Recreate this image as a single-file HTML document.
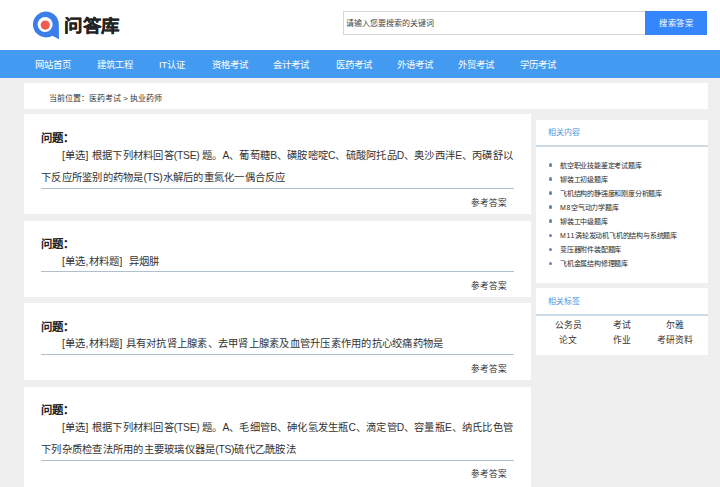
<!DOCTYPE html>
<html lang="zh-CN">
<head>
<meta charset="utf-8">
<style>
*{margin:0;padding:0;box-sizing:border-box;}
html,body{width:720px;height:487px;overflow:hidden;}
body{background:#efefef;font-family:"Liberation Sans",sans-serif;color:#333;position:relative;}
.abs{position:absolute;}
.j{text-align:justify;text-align-last:justify;}
#header{left:0;top:0;width:720px;height:50px;background:#fff;}
#logo{left:30px;top:10px;width:32px;height:32px;}
#logotext{left:64px;top:15.8px;transform:scale(0.975,0.87);transform-origin:0 0;-webkit-text-stroke:0.35px #222;font-size:19px;font-weight:bold;color:#222;line-height:24px;letter-spacing:0px;white-space:nowrap;}
#search{left:343px;top:11px;width:303px;height:24px;border:1px solid #d6d6d6;background:#fff;}
#search span{position:absolute;left:2px;top:6.7px;font-size:8px;line-height:10px;color:#444;white-space:nowrap;}
#btn{left:645px;top:11px;width:62px;height:24px;background:#3686fb;color:#fff;font-size:8.5px;line-height:24px;text-align:center;}
#nav{left:0;top:50px;width:720px;height:28px;background:#439af1;}
#nav span{position:absolute;top:1px;line-height:28px;font-size:9.4px;color:#fff;white-space:nowrap;}
#crumb{left:24px;top:83px;width:684px;height:26px;background:#fff;}
#crumb span{position:absolute;left:25px;top:9.5px;font-size:8px;line-height:11px;color:#333;white-space:nowrap;}
.q{position:absolute;left:24px;width:507px;background:#fff;}
.q .t{position:absolute;left:17px;width:33px;font-size:11.4px;font-weight:bold;color:#222;line-height:14px;white-space:nowrap;}
.q .c{position:absolute;left:17px;font-size:10.3px;line-height:22px;letter-spacing:0.25px;color:#333;white-space:nowrap;}
.q .c i{font-style:normal;letter-spacing:-0.25px;}
.q .line{position:absolute;left:17px;width:473px;height:1px;background:#b0c0d0;}
.q .ans{position:absolute;right:24px;width:36px;font-size:8.6px;line-height:11px;color:#333;white-space:nowrap;}
.side{position:absolute;left:536px;width:172px;background:#fff;}
.side .h{position:absolute;left:12px;width:32px;font-size:8px;line-height:11px;color:#5394e3;white-space:nowrap;}
.side .hl{position:absolute;left:0;width:172px;height:2px;background:#ccdae5;}
.side ul{list-style:none;position:absolute;left:0;top:0;}
.side li{position:absolute;left:24px;font-size:7px;line-height:9px;letter-spacing:-0.2px;color:#2a2a2a;white-space:nowrap;}
.side li:before{content:"";position:absolute;left:-11.5px;top:2.5px;width:3.5px;height:3.5px;border-radius:50%;background:#6a84b0;}
.side li i{font-style:normal;letter-spacing:0.6px;}
.tag{position:absolute;font-size:8.8px;line-height:11px;color:#333;white-space:nowrap;transform:translateX(-50%);}
</style>
</head>
<body>
<div id="header" class="abs"></div>
<svg id="logo" class="abs" viewBox="0 0 32 32">
  <path d="M28.8 14.5 A12.9 12.9 0 1 0 22.35 25.67 L29 29.2 L28.8 14.5 Z" fill="#3a7ee9"/>
  <circle cx="15.1" cy="14.45" r="7.5" fill="#fff"/>
  <circle cx="15.25" cy="15.1" r="4.6" fill="#ee5a50"/>
</svg>
<div id="logotext" class="abs j" style="width:57px">问答库</div>
<div id="search" class="abs"><span class="j" style="width:88px">请输入您要搜索的关键词</span></div>
<div id="btn" class="abs"><span class="j" style="display:inline-block;width:34px;line-height:24px;font-size:8.2px;letter-spacing:0.5px;">搜索答案</span></div>

<div id="nav" class="abs">
  <span class="j" style="left:35px;width:36px">网站首页</span>
  <span class="j" style="left:97px;width:36px">建筑工程</span>
  <span class="j" style="left:159px;width:26.35px">IT认证</span>
  <span class="j" style="left:212px;width:36px">资格考试</span>
  <span class="j" style="left:273px;width:36px">会计考试</span>
  <span class="j" style="left:336px;width:36px">医药考试</span>
  <span class="j" style="left:397px;width:36px">外语考试</span>
  <span class="j" style="left:458px;width:36px">外贸考试</span>
  <span class="j" style="left:520px;width:36px">学历考试</span>
</div>

<div id="crumb" class="abs"><span class="j" style="width:113.2px">当前位置：医药考试 &gt; 执业药师</span></div>

<div class="q" style="top:114px;height:99.5px;">
  <div class="t j" style="top:16.5px">问题：</div>
  <div class="c j" style="top:31px;left:38px;width:451.1px;">[单选] 根据下列材料回答<i>(TSE) </i>题。<i>A</i>、葡萄糖<i>B</i>、磺胺嘧啶<i>C</i>、硫酸阿托品<i>D</i>、奥沙西泮<i>E</i>、丙磺舒以</div>
  <div class="c j" style="top:53px;width:244.52px;">下反应所鉴别的药物是<i>(TS)</i>水解后的重氮化一偶合反应</div>
  <div class="line" style="top:74px;"></div>
  <div class="ans j" style="top:83.5px;">参考答案</div>
</div>

<div class="q" style="top:220.5px;height:76.5px;">
  <div class="t j" style="top:16px">问题：</div>
  <div class="c j" style="top:30px;left:38px;width:97.57px;">[单选,材料题]&nbsp;&nbsp;异烟肼</div>
  <div class="line" style="top:50.5px;"></div>
  <div class="ans j" style="top:60px;">参考答案</div>
</div>

<div class="q" style="top:303px;height:76.5px;">
  <div class="t j" style="top:16.5px">问题：</div>
  <div class="c j" style="top:30px;left:38px;width:381.46px;">[单选,材料题] 具有对抗肾上腺素、去甲肾上腺素及血管升压素作用的抗心绞痛药物是</div>
  <div class="line" style="top:51px;"></div>
  <div class="ans j" style="top:60.5px;">参考答案</div>
</div>

<div class="q" style="top:386.5px;height:109.5px;">
  <div class="t j" style="top:16.5px">问题：</div>
  <div class="c j" style="top:30px;left:38px;width:451.1px;">[单选] 根据下列材料回答<i>(TSE) </i>题。<i>A</i>、毛细管<i>B</i>、砷化氢发生瓶<i>C</i>、滴定管<i>D</i>、容量瓶<i>E</i>、纳氏比色管</div>
  <div class="c j" style="top:52.5px;width:254.77px;">下列杂质检查法所用的主要玻璃仪器是<i>(TS)</i>硫代乙酰胺法</div>
  <div class="line" style="top:73.5px;"></div>
  <div class="ans j" style="top:82.5px;">参考答案</div>
</div>

<div class="side" style="top:120px;height:163px;">
  <div class="h j" style="top:7px;">相关内容</div>
  <div class="hl" style="top:24.5px;"></div>
  <ul>
    <li class="j" style="top:40.5px;width:81.61px">航空职业技能鉴定考试题库</li>
    <li class="j" style="top:54.6px;width:47.61px">铆装工初级题库</li>
    <li class="j" style="top:68.7px;width:102.02px">飞机结构的静强度和刚度分析题库</li>
    <li class="j" style="top:82.8px;width:58.55px"><i>M8</i>空气动力学题库</li>
    <li class="j" style="top:96.9px;width:47.61px">铆装工中级题库</li>
    <li class="j" style="top:111.0px;width:116.93px"><i>M11</i>涡轮发动机飞机的结构与系统题库</li>
    <li class="j" style="top:125.1px;width:61.21px">变压器附件装配题库</li>
    <li class="j" style="top:139.2px;width:68.02px">飞机金属结构修理题库</li>
  </ul>
</div>

<div class="side" style="top:288px;height:66.5px;">
  <div class="h j" style="top:8px;">相关标签</div>
  <div class="hl" style="top:26px;"></div>
  <span class="tag j" style="left:32px;top:31.6px;width:27px;">公务员</span>
  <span class="tag j" style="left:86px;top:31.6px;width:18px;">考试</span>
  <span class="tag j" style="left:139px;top:31.6px;width:18px;">尔雅</span>
  <span class="tag j" style="left:32px;top:46.6px;width:18px;">论文</span>
  <span class="tag j" style="left:86px;top:46.6px;width:18px;">作业</span>
  <span class="tag j" style="left:139px;top:46.6px;width:36px;">考研资料</span>
</div>
</body>
</html>
